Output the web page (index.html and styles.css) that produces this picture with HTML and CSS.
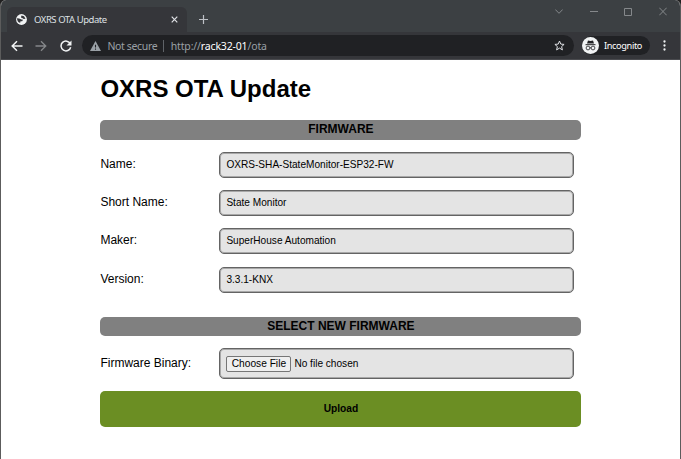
FILE: index.html
```html
<!DOCTYPE html>
<html lang="en">
<head>
<meta charset="utf-8">
<title>OXRS OTA Update</title>
<link rel="stylesheet" href="styles.css">
</head>
<body>
<div class="window">
  <header class="tabstrip">
    <div class="tab">
      <svg class="globe" width="11" height="11" viewBox="0 0 11 11"><circle cx="5.5" cy="5.5" r="5.4" fill="#f1f3f4"/><path d="M1 4.2 3.2 4.600l2.200.9 1.600.2-.8 1.500-1.700.1-.3 1.500C2.500 8.500 1 7 1 4.200zM5.500 1.600 8 2.300l1.500 2.500-1.800.3L6.200 4 4.900 3.500z" fill="#35363a"/></svg>
      <span class="tab-title">OXRS OTA Update</span>
      <svg class="tab-close" width="7" height="7" viewBox="0 0 7 7"><path d="M.7.7l5.600 5.600M6.300.7.7 6.300" stroke="#dfe1e5" stroke-width="1.200"/></svg>
    </div>
    <svg class="new-tab" width="9" height="9" viewBox="0 0 9 9"><path d="M4.500 0v9M0 4.500h9" stroke="#bdc1c6" stroke-width="1.200"/></svg>
    <div class="controls">
      <svg width="8" height="9" viewBox="0 0 8 9"><path d="M.3 2.500 4 6.300l3.700-3.800" fill="none" stroke="#85888b"/></svg>
      <svg width="8" height="9" viewBox="0 0 8 9"><path d="M0 4.500h8" stroke="#85888b"/></svg>
      <svg width="8" height="9" viewBox="0 0 8 9"><path d="M.5 1.500h7v7h-7z" fill="none" stroke="#85888b"/></svg>
      <svg width="8" height="9" viewBox="0 0 8 9"><path d="M.3.700l7.400 7.600M7.700.700.3 8.300" stroke="#85888b"/></svg>
    </div>
  </header>
  <div class="toolbar">
    <svg class="nav" width="12" height="12" viewBox="0 0 12 12"><path d="M11.500 6H1.500M6 1.200 1.200 6 6 10.800" fill="none" stroke="#f1f3f4" stroke-width="1.500"/></svg>
    <svg class="nav" width="12" height="12" viewBox="0 0 12 12"><path d="M.5 6h10M6 1.200 10.800 6 6 10.800" fill="none" stroke="#85878a" stroke-width="1.300"/></svg>
    <svg class="nav" width="12" height="12" viewBox="0 0 12 12"><path d="M10.300 3.700A4.900 4.900 0 1 0 10.700 7.200" fill="none" stroke="#f1f3f4" stroke-width="1.500"/><path d="M11.500.5v5H6.500z" fill="#f1f3f4"/></svg>
    <div class="address">
      <svg class="warning" width="11" height="10" viewBox="0 0 11 10"><path d="M5.500 0 11 10H0z" fill="#9aa0a6"/><path d="M5.500 3.700v2.900M5.500 7.500v1.200" stroke="#202124" stroke-width="1.100"/></svg>
      <span class="security">Not secure</span>
      <span class="divider"></span>
      <span class="url">http://<b>rack32-01</b>/ota</span>
      <svg class="star" width="11" height="11" viewBox="0 0 11 11"><path d="M5.500 1l1.300 3.100 3.300.3-2.500 2.200.8 3.300-2.900-1.800-2.900 1.800.8-3.300L.9 4.400l3.300-.3z" fill="none" stroke="#dfe1e5"/></svg>
    </div>
    <div class="profile">
      <svg width="17" height="17" viewBox="0 0 17 17"><circle cx="8.500" cy="8.500" r="8.500" fill="#f1f3f4"/><path d="M6 3.500 8.500 4 11 3.500l1 3H5z" fill="#202124"/><path d="M3.500 7.700h10" stroke="#202124"/><g fill="none" stroke="#35363a" stroke-width=".9"><circle cx="6" cy="11" r="1.900"/><circle cx="11" cy="11" r="1.900"/><path d="M7.900 10.800h1.200"/></g></svg>
      <span>Incognito</span>
    </div>
    <svg class="menu" width="3" height="11" viewBox="0 0 3 11"><g fill="#f1f3f4"><circle cx="1.500" cy="1.500" r="1.150"/><circle cx="1.500" cy="5.500" r="1.150"/><circle cx="1.500" cy="9.500" r="1.150"/></g></svg>
  </div>
  <main class="page">
    <h1>OXRS OTA Update</h1>
    <h2>FIRMWARE</h2>
    <div class="row"><label>Name:</label><div class="field">OXRS-SHA-StateMonitor-ESP32-FW</div></div>
    <div class="row"><label>Short Name:</label><div class="field">State Monitor</div></div>
    <div class="row"><label>Maker:</label><div class="field">SuperHouse Automation</div></div>
    <div class="row"><label>Version:</label><div class="field">3.3.1-KNX</div></div>
    <h2 class="second">SELECT NEW FIRMWARE</h2>
    <div class="row file-row"><label>Firmware Binary:</label><div class="field file"><button class="choose">Choose File</button><span>No file chosen</span></div></div>
    <button class="upload">Upload</button>
  </main>
</div>
</body>
</html>
```
FILE: styles.css
```css
* { box-sizing: border-box; }
body { margin: 0; background: #202020; font-family: "Liberation Sans", Arial, sans-serif; }
svg { display: block; flex: none; }
.window {
  width: 681px; height: 459px; overflow: hidden;
  border: solid #5c5c5c; border-width: 0 1px;
  border-radius: 6px 6px 0 0; background: #fff;
}
.tabstrip { display: flex; height: 32px; background: #3c4043; padding-left: 6px; }
.tab {
  display: flex; align-items: center; width: 180px; height: 25px; margin-top: 7px;
  padding: 0 9px; background: #35363a; border-radius: 6px 6px 0 0;
}
.tab-title { margin-left: 7px; font: 9.500px "Noto Sans", sans-serif; color: #dfe1e5; white-space: nowrap; letter-spacing: -.45px; }
.tab-close { margin-left: auto; }
.new-tab { margin: 15px 0 0 12px; }
.controls { display: flex; gap: 26.500px; margin: 7px 13.500px 0 auto; }
.toolbar {
  display: flex; align-items: center; height: 28px; padding: 0 12px 0 10px;
  background: #35363a; border-bottom: 1px solid #4a4b4f;
}
.nav { margin-right: 12.300px; }
.address {
  display: flex; align-items: center; width: 492px; height: 21px; padding: 0 9px 0 8px;
  background: #202124; border-radius: 11px; margin-left: -2px;
  font: 10.500px "Noto Sans", sans-serif; color: #9aa0a6; white-space: nowrap;
}
.security { margin-left: 6.500px; letter-spacing: -.35px; }
.divider { width: 1px; height: 12px; margin: 0 6.500px 0 6px; background: #5f6368; }
.url { letter-spacing: -.16px; }
.url b { font-weight: 400; color: #fff; }
.star { margin-left: auto; }
.profile {
  display: flex; align-items: center; gap: 5px; width: 68px; height: 19px; margin-left: 8px; padding-left: 0;
  background: #202124; border-radius: 10px; font: 9.200px "Noto Sans", sans-serif; color: #fff; letter-spacing: -.35px;
}
.menu { margin-left: auto; margin-right: 2px; }
.page { width: 481px; margin-left: 99.400px; color: #000; }
h1 { margin: 14px 0 17px; font-size: 24px; line-height: 29px; white-space: nowrap; }
h2 {
  height: 19.500px; margin: 0 0 12px; border-radius: 5px; background: #808080;
  font-size: 12px; line-height: 19px; text-align: center;
}
.row { display: flex; height: 26px; margin-bottom: 12.400px; }
label { width: 119px; font-size: 12px; line-height: 25px; }
.field {
  width: 355px; padding-left: 6px; border: 1px solid #646464; border-radius: 5px;
  box-shadow: inset 0 0 0 1px rgba(95, 95, 95, .45);
  background: #e4e4e4; font-size: 10.100px; line-height: 23.500px; white-space: nowrap;
}
.second { margin-top: 24px; }
.file-row { height: 31px; margin-bottom: 12px; }
.file-row label { line-height: 30px; }
.file { display: flex; align-items: center; gap: 3px; }
.choose {
  width: 65px; height: 16px; padding: 0; border: 1px solid #767676; border-radius: 2px;
  background: #efefef; color: #000; font: 10.200px/14px "Liberation Sans", Arial, sans-serif;
}
.upload {
  display: block; width: 481px; height: 35.500px; padding: 0; border: 0; border-radius: 5px;
  background: #6b8e23; color: #000; font: bold 10.200px "Liberation Sans", Arial, sans-serif;
}
```
